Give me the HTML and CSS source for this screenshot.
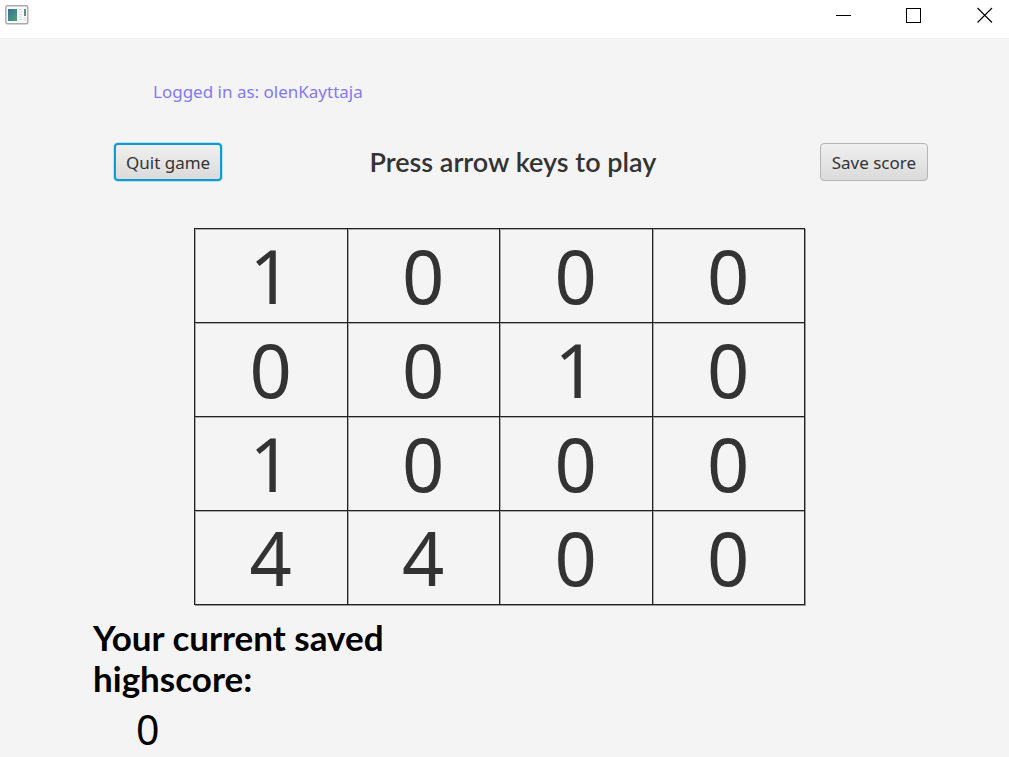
FILE: index.html
```html
<!DOCTYPE html>
<html lang="en">
<head>
<meta charset="utf-8">
<meta name="viewport" content="width=device-width, initial-scale=1">
<title>Game</title>
<link rel="stylesheet" href="styles.css">
</head>
<body>
<header class="titlebar">
  <svg class="app-icon" width="24" height="20" viewBox="0 0 24 20" aria-hidden="true">
    <defs><linearGradient id="pane" x1="0" y1="0" x2="1" y2="1"><stop offset="0" stop-color="#3a7099"/><stop offset="1" stop-color="#4d9f78"/></linearGradient></defs>
    <rect x=".8" y=".8" width="22" height="18" rx="1.5" fill="#fafafa" stroke="#aaa" stroke-width="1.4"/>
    <rect x="3" y="4" width="9" height="12" fill="url(#pane)"/>
    <path d="M14 4.500h3M14 7h3M14 9.500h3M14 12h3M14 14.500h3" stroke="#d5dadd"/>
    <rect x="19" y="4" width="2" height="7" fill="#5c8c83"/>
    <path d="M18.500 13h3M18.500 15h3" stroke="#d5dadd"/>
  </svg>
  <div class="window-controls">
    <button class="window-button" aria-label="Minimize"><svg width="16" height="16" viewBox="0 0 16 16"><path d="M0 8.500h15" stroke="#000"/></svg></button>
    <button class="window-button" aria-label="Maximize"><svg width="16" height="16" viewBox="0 0 16 16"><rect x=".5" y="1.500" width="14" height="14" fill="none" stroke="#000"/></svg></button>
    <button class="window-button" aria-label="Close"><svg width="16" height="16" viewBox="0 0 16 16"><path d="M.5 1l14.500 14.500M15 1L.5 15.500" stroke="#000" stroke-width="1.100"/></svg></button>
  </div>
</header>
<main class="game">
  <p class="login">Logged in as: olenKayttaja</p>
  <div class="toolbar">
    <button class="button button-focused">Quit game</button>
    <h1 class="hint">Press arrow keys to play</h1>
    <button class="button">Save score</button>
  </div>
  <div class="board-area">
    <table class="board">
      <tbody>
        <tr><td>1</td><td>0</td><td>0</td><td>0</td></tr>
        <tr><td>0</td><td>0</td><td>1</td><td>0</td></tr>
        <tr><td>1</td><td>0</td><td>0</td><td>0</td></tr>
        <tr><td>4</td><td>4</td><td>0</td><td>0</td></tr>
      </tbody>
    </table>
  </div>
  <section class="highscore">
    <h2 class="highscore-title">Your current saved highscore:</h2>
    <p class="highscore-value">0</p>
  </section>
</main>
</body>
</html>
```
FILE: styles.css
```css
* { box-sizing: border-box; }
body {
  margin: 0;
  min-height: 100vh;
  background: #f4f4f4;
  color: #333;
  font-family: "Noto Sans", "Open Sans", sans-serif;
}
.titlebar {
  display: flex;
  justify-content: space-between;
  align-items: flex-start;
  height: 38px;
  padding-left: 5px;
  background: #fff;
}
.app-icon { margin-top: 5px; }
.window-controls { display: flex; }
.window-button {
  display: flex;
  justify-content: center;
  align-items: center;
  width: 70px;
  height: 30px;
  padding: 0;
  border: 0;
  background: none;
}
.window-button:last-child {
  justify-content: flex-end;
  width: 60px;
  padding-right: 16px;
}
.login {
  margin: 0;
  padding: 42px 153px 0;
  color: #8379f0;
  font-size: 17px;
  line-height: 24px;
}
.toolbar {
  display: flex;
  justify-content: space-between;
  align-items: center;
  padding: 39px 81px 0 114px;
}
.button {
  height: 38px;
  padding: 0 11px;
  border: 1px solid #b5b5b5;
  border-radius: 4px;
  background: linear-gradient(#f0f0f0, #dadada);
  color: #333;
  font-family: inherit;
  font-size: 17px;
}
.button-focused {
  border: 2px solid #0e9bd0;
  padding: 0 10px;
  box-shadow: 0 0 0 1px #b9e3f0;
}
.hint {
  margin: 0;
  padding-right: 16px;
  font: 600 27px/38px Lato, sans-serif;
}
.board-area { padding: 47px 204px 0 194px; }
.board {
  width: 100%;
  table-layout: fixed;
  border-collapse: collapse;
  box-shadow: 1px 1px #999;
}
.board td {
  height: 94px;
  padding: 0;
  border: 1px solid #222;
  box-shadow: inset 1px 1px #aaa;
  font-size: 74px;
  line-height: 92px;
  text-align: center;
}
.highscore {
  padding: 12px 93px 0;
  color: #000;
}
.highscore-title {
  max-width: 320px;
  margin: 0;
  font: 700 35px/41px Lato, sans-serif;
}
.highscore-value {
  margin: 0;
  padding-left: 43px;
  font-size: 41px;
  line-height: 60px;
}
```
